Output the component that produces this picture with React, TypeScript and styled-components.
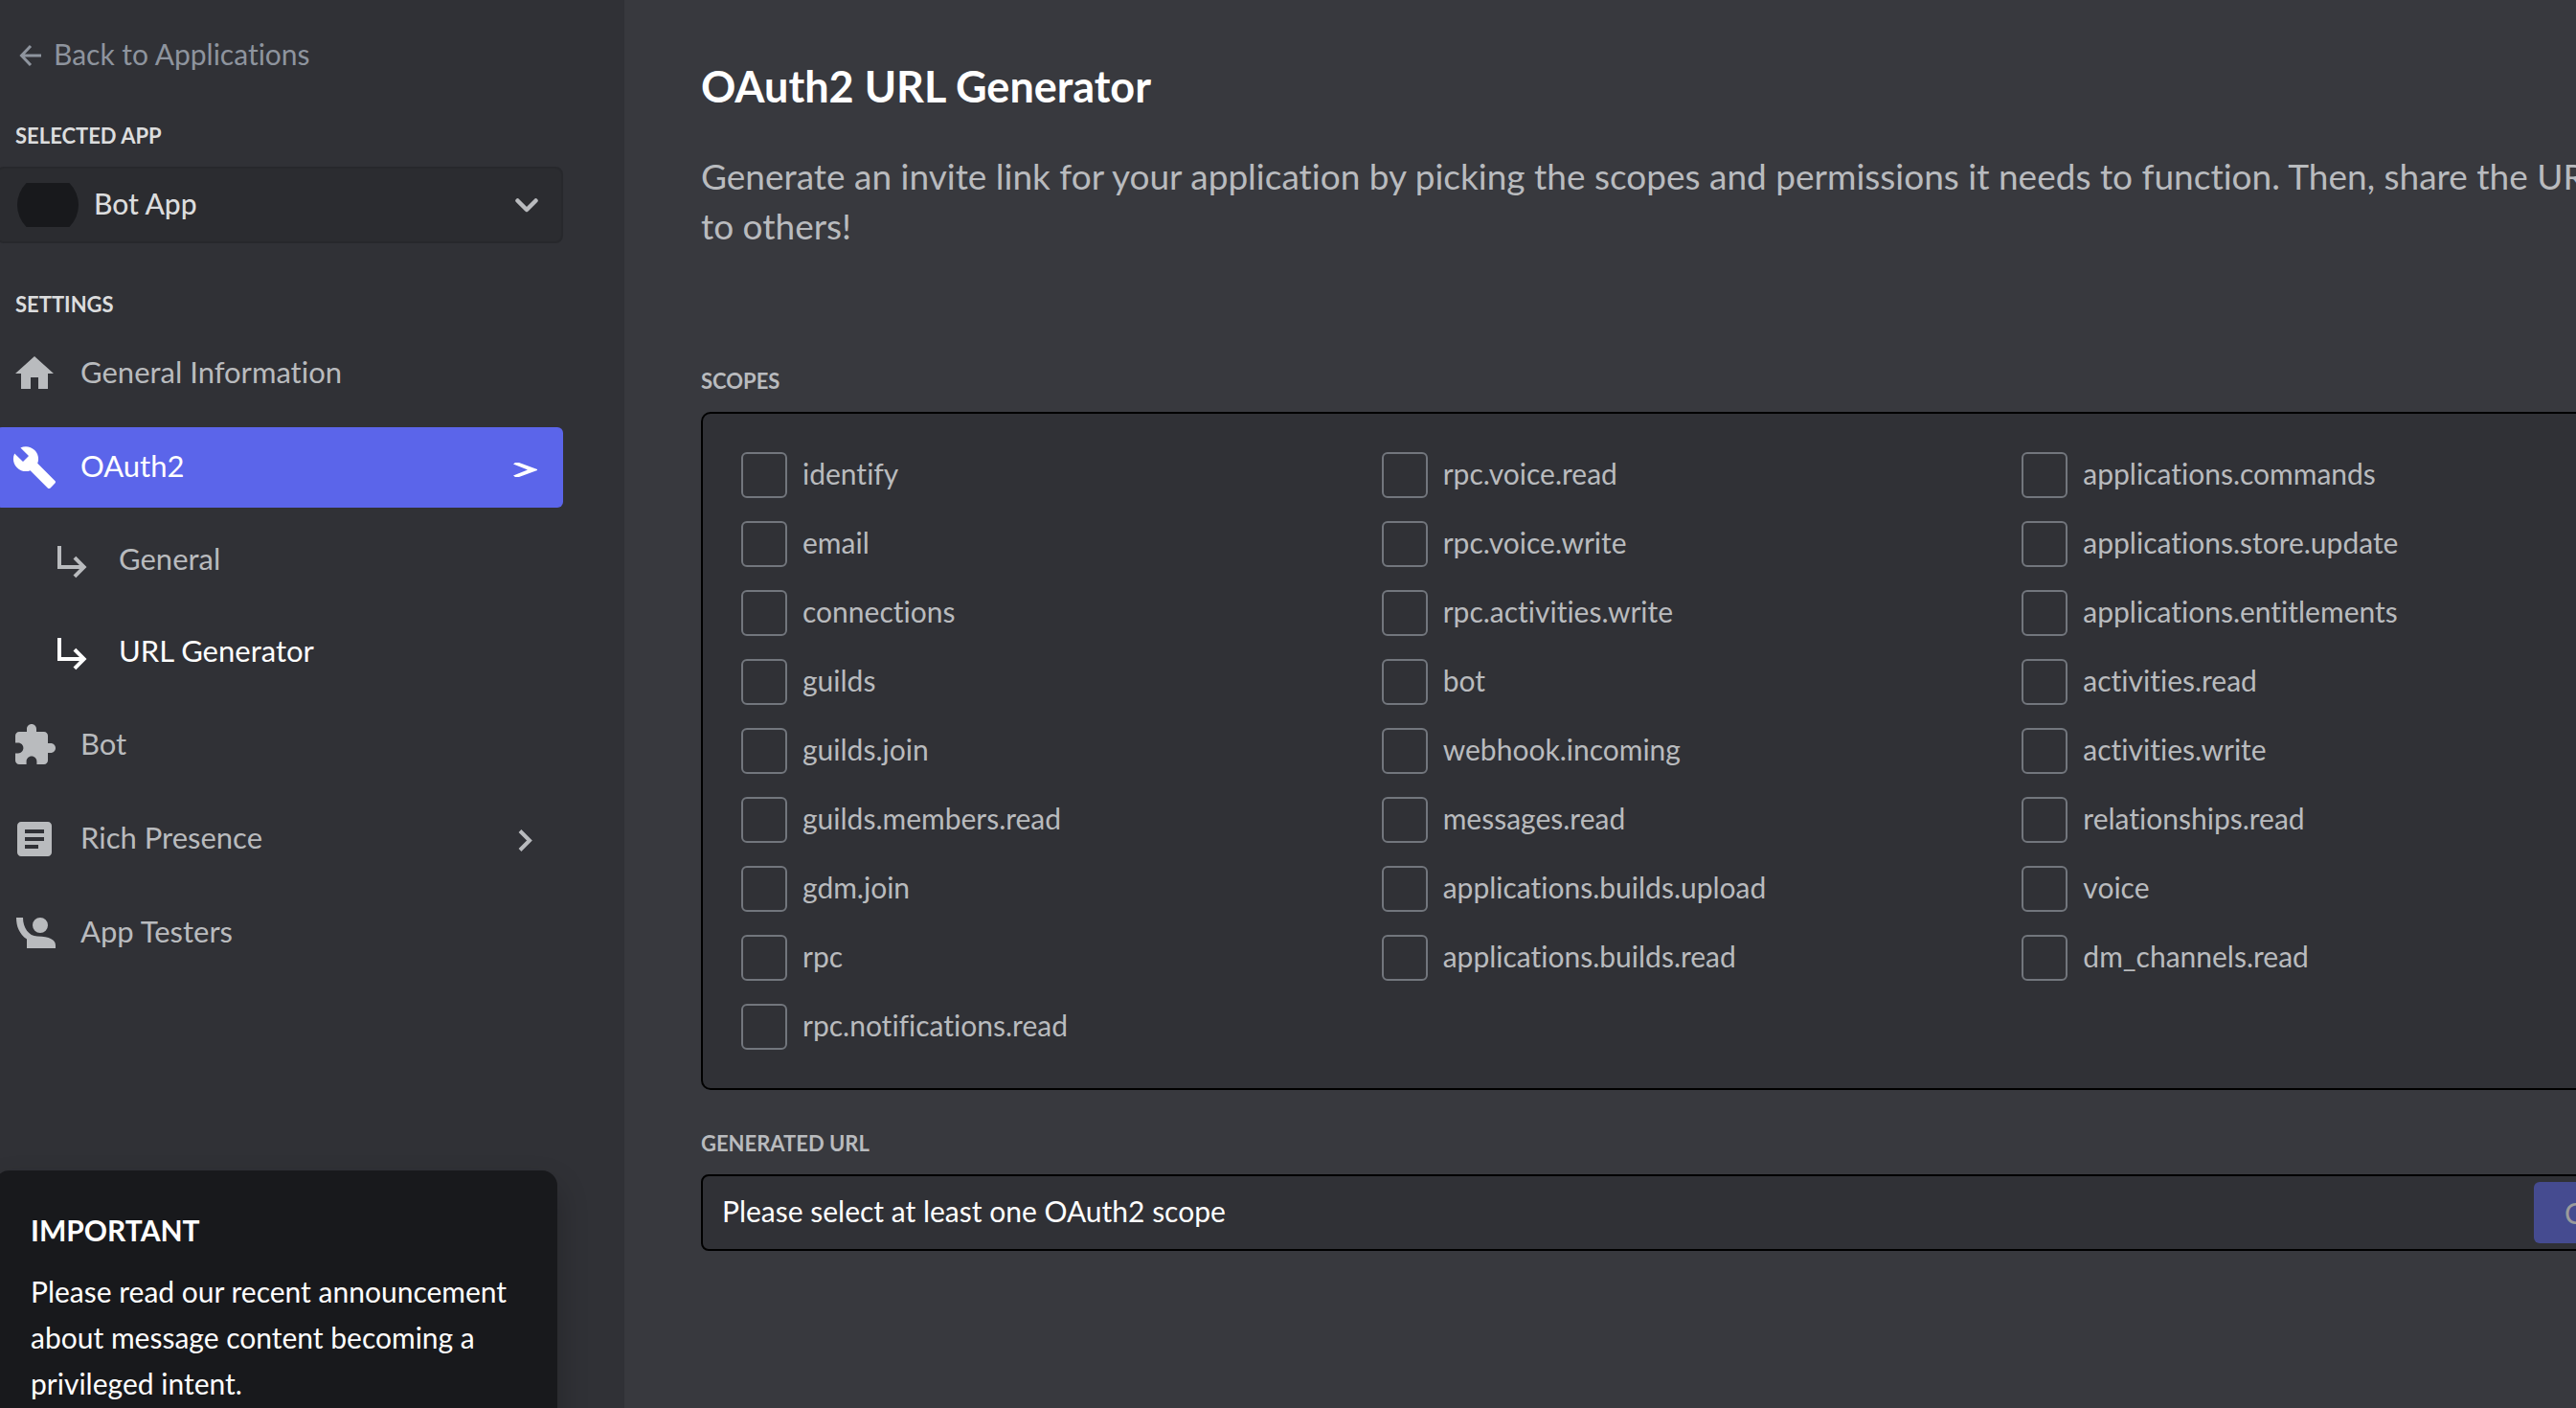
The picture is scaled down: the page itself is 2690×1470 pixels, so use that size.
import React, { useState } from 'react';
import styled, { createGlobalStyle, css } from 'styled-components';

const GlobalStyle = createGlobalStyle`
  *, *::before, *::after { box-sizing: border-box; }
  body {
    margin: 0;
    background: #38393e;
    font-family: Lato, "Open Sans", sans-serif;
    font-size: 30px;
    font-variant-ligatures: none;
    line-height: 48px;
    color: #fff;
  }
  button, input, select { font: inherit; color: inherit; }
`;

const Page = styled.div`
  display: flex;
  height: 100vh;
  overflow: hidden;
`;

const Sidebar = styled.aside`
  flex: 0 0 652px;
  padding: 34px 64px 0 0;
  background: #303136;
`;

const BackLink = styled.a`
  display: flex;
  align-items: center;
  gap: 12px;
  height: 48px;
  margin-bottom: 44px;
  padding-left: 20px;
  color: #8e949e;
  text-decoration: none;
`;

const Caption = styled.span`
  flex: 1;
  padding-bottom: 4px;
`;

const sectionLabel = css`
  display: block;
  font-size: 22px;
  font-weight: 700;
  line-height: 32px;
  text-transform: uppercase;
`;

const SideLabel = styled.label`
  ${sectionLabel}
  padding: 0 16px 16px;
  color: #dcddde;
`;

const SideHeading = styled.h2`
  ${sectionLabel}
  margin: 48px 0 14px;
  padding: 0 16px;
  color: #dcddde;
`;

const AppPicker = styled.div`
  display: flex;
  align-items: center;
  height: 80px;
  margin-left: -4px;
  padding: 0 24px 0 20px;
  border: 2px solid #27282c;
  border-radius: 8px;
  background: #2b2c30;
`;

const Avatar = styled.span`
  flex: none;
  display: flex;
  align-items: center;
  width: 64px;
  height: 46px;
  overflow: hidden;

  &::before {
    content: '';
    flex: none;
    width: 64px;
    height: 64px;
    border-radius: 50%;
    background: #18191c;
  }
`;

const AppSelect = styled.select`
  flex: 1;
  min-width: 0;
  height: 100%;
  padding: 0 0 4px 16px;
  border: 0;
  outline: 0;
  appearance: none;
  background: transparent;
  color: #dcddde;
  font-weight: 500;
`;

const Nav = styled.nav`
  display: flex;
  flex-direction: column;
  gap: 14px;
  margin-left: -4px;
`;

const NavLink = styled.a<{ $selected?: boolean }>`
  display: flex;
  align-items: center;
  gap: 24px;
  height: 84px;
  padding: 0 24px 0 16px;
  border-radius: 6px;
  background: ${(p) => (p.$selected ? '#5b65ea' : 'transparent')};
  color: ${(p) => (p.$selected ? '#fff' : '#b9bbbe')};
  font-size: 31px;
  text-decoration: none;
`;

const SubLink = styled(NavLink)<{ $current?: boolean }>`
  height: 82px;
  padding-left: 56px;
  color: ${(p) => (p.$current ? '#fff' : '#b9bbbe')};
`;

const Notice = styled.section`
  margin: 206px 6px 0 -6px;
  padding: 38px;
  border-radius: 16px;
  background: #18191c;
  box-shadow: 0 16px 32px rgba(0, 0, 0, 0.24);
`;

const NoticeTitle = styled.h3`
  margin: 0 0 16px;
  font-size: inherit;
  font-weight: 700;
  text-transform: uppercase;
`;

const NoticeText = styled.p`
  margin: 0;
`;

const Main = styled.main`
  flex: 1;
  min-width: 0;
  padding: 62px 0 0 80px;
`;

const Content = styled.div`
  margin-right: -132px;
`;

const Title = styled.h1`
  margin: 0 0 40px;
  font-size: 45px;
  font-weight: 700;
  line-height: 56px;
`;

const Description = styled.p`
  margin: 0 0 120px;
  padding-right: 64px;
  color: #b9bbbe;
  font-size: 37px;
  line-height: 52px;
`;

const Fieldset = styled.fieldset`
  min-width: 0;
  margin: 0 0 40px;
  padding: 0;
  border: 0;
`;

const Legend = styled.legend`
  ${sectionLabel}
  padding: 0 0 16px;
  color: #b9bbbe;
`;

const ScopePanel = styled.div`
  display: grid;
  grid-template-columns: repeat(3, 1fr);
  padding: 40px;
  border: 2px solid #000;
  border-radius: 10px;
  background: #303136;
`;

const ScopeColumn = styled.ul`
  display: flex;
  flex-direction: column;
  gap: 24px;
  margin: 0;
  padding: 0;
  list-style: none;
`;

const ScopeLabel = styled.label`
  display: flex;
  align-items: center;
  gap: 16px;
  height: 48px;
  color: #b9bbbe;
`;

const Checkbox = styled.input`
  appearance: none;
  width: 48px;
  height: 48px;
  margin: 0;
  border: 2px solid #72767d;
  border-radius: 6px;

  &:checked {
    border-color: #5b65ea;
    background: #5b65ea;
  }
`;

const UrlLabel = styled.label`
  ${sectionLabel}
  padding-bottom: 16px;
  color: #b9bbbe;
`;

const UrlBox = styled.div`
  display: flex;
  height: 80px;
  padding: 6px;
  border: 2px solid #000;
  border-radius: 8px;
  background: #303136;
`;

const UrlInput = styled.input`
  flex: 1;
  min-width: 0;
  padding: 0 14px 4px;
  border: 0;
  outline: 0;
  background: transparent;
`;

const CopyButton = styled.button`
  min-width: 168px;
  padding: 0 32px;
  border: 0;
  border-radius: 6px;
  background: #454b90;
  color: #9b9b9b;
  text-align: left;
`;

const Icon = styled.svg`
  flex: none;
  fill: currentColor;
`;

const NavIcon = ({ d }: { d: string }) => (
  <Icon width="48" height="48" viewBox="0 0 24 24" aria-hidden="true">
    <path d={d} />
  </Icon>
);

const icons = {
  home: 'M10 20v-6h4v6h5v-8h3L12 3 2 12h3v8z',
  wrench:
    'M22.7 19l-9.1-9.1c.9-2.3.4-5-1.5-6.9-2-2-5-2.4-7.4-1.3L9 6 6 9 1.6 4.7C.4 7.1.9 10.1 2.9 12.1c1.9 1.9 4.6 2.4 6.9 1.5l9.1 9.1c.4.4 1 .4 1.4 0l2.3-2.3c.5-.4.5-1.1.1-1.4z',
  puzzle:
    'M20.5 11H19V7c0-1.1-.9-2-2-2h-4V3.5C13 2.12 11.88 1 10.5 1S8 2.12 8 3.5V5H4c-1.1 0-1.99.9-1.99 2v3.8H3.5c1.49 0 2.7 1.21 2.7 2.7s-1.21 2.7-2.7 2.7H2V20c0 1.1.9 2 2 2h3.8v-1.5c0-1.49 1.21-2.7 2.7-2.7 1.49 0 2.7 1.21 2.7 2.7V22H17c1.1 0 2-.9 2-2v-4h1.5c1.38 0 2.5-1.12 2.5-2.5S21.88 11 20.5 11z',
  article:
    'M19 3H5c-1.1 0-2 .9-2 2v14c0 1.1.9 2 2 2h14c1.1 0 2-.9 2-2V5c0-1.1-.9-2-2-2zm-5 14H7v-2h7v2zm3-4H7v-2h10v2zm0-4H7V7h10v2z',
  tester:
    'M2.5 4H6c0 5.4 3 9.6 7.5 9.8C20 14 23 15.6 23 18.5V20H8v-4.7C4 12.5 2.5 8.500 2.500 4zM15 4a4 4 0 1 1 0 8 4 4 0 1 1 0-8z',
};

const SubArrow = () => (
  <Icon width="48" height="48" viewBox="0 0 48 48" aria-hidden="true">
    <path d="M8 9h4v20h19l-6.500-6.500 2.800-2.800L38.500 31 27.300 42.300l-2.800-2.800L31 33H8z" />
  </Icon>
);

const Chevron = ({ direction }: { direction: 'down' | 'right' }) =>
  direction === 'down' ? (
    <Icon width="24" height="24" viewBox="0 0 24 24" aria-hidden="true">
      <path d="M2.500 7.500 12 17l9.500-9.500" fill="none" stroke="#b9bbbe" strokeWidth="4.500" strokeLinecap="round" strokeLinejoin="round" />
    </Icon>
  ) : (
    <Icon width="24" height="28" viewBox="0 0 24 28" aria-hidden="true">
      <path d="M3 5.500l10 10-10 10" fill="none" stroke="currentColor" strokeWidth="4" />
    </Icon>
  );

const OpenMarker = () => (
  <Icon width="28" height="24" viewBox="0 0 28 24" aria-hidden="true">
    <path d="M0 8.500 2 7h4l19 7v1L6 22H2l-2-1.500 15-6z" />
  </Icon>
);

const scopeColumns = [
  ['identify', 'email', 'connections', 'guilds', 'guilds.join', 'guilds.members.read', 'gdm.join', 'rpc', 'rpc.notifications.read'],
  ['rpc.voice.read', 'rpc.voice.write', 'rpc.activities.write', 'bot', 'webhook.incoming', 'messages.read', 'applications.builds.upload', 'applications.builds.read'],
  ['applications.commands', 'applications.store.update', 'applications.entitlements', 'activities.read', 'activities.write', 'relationships.read', 'voice', 'dm_channels.read'],
];

export default function App() {
  const [scopes, setScopes] = useState<string[]>([]);
  const toggle = (scope: string) =>
    setScopes((s) => (s.includes(scope) ? s.filter((x) => x !== scope) : [...s, scope]));
  const url = scopes.length
    ? `https://discord.com/api/oauth2/authorize?scope=${scopes.join('%20')}`
    : 'Please select at least one OAuth2 scope';

  return (
    <Page>
      <GlobalStyle />
      <Sidebar>
        <BackLink href="#applications">
          <Icon width="24" height="24" viewBox="0 0 24 24" aria-hidden="true">
            <path d="M12 2 2.500 12 12 22M2.500 12H23" fill="none" stroke="currentColor" strokeWidth="3" />
          </Icon>
          <Caption>Back to Applications</Caption>
        </BackLink>

        <SideLabel htmlFor="selected-app">Selected App</SideLabel>
        <AppPicker>
          <Avatar />
          <AppSelect id="selected-app">
            <option>Bot App</option>
          </AppSelect>
          <Chevron direction="down" />
        </AppPicker>

        <SideHeading>Settings</SideHeading>
        <Nav>
          <NavLink href="#information">
            <NavIcon d={icons.home} />
            <Caption>General Information</Caption>
          </NavLink>
          <NavLink href="#oauth2" $selected>
            <NavIcon d={icons.wrench} />
            <Caption>OAuth2</Caption>
            <OpenMarker />
          </NavLink>
          <SubLink href="#general">
            <SubArrow />
            <Caption>General</Caption>
          </SubLink>
          <SubLink href="#url-generator" $current aria-current="page">
            <SubArrow />
            <Caption>URL Generator</Caption>
          </SubLink>
          <NavLink href="#bot">
            <NavIcon d={icons.puzzle} />
            <Caption>Bot</Caption>
          </NavLink>
          <NavLink href="#rich-presence">
            <NavIcon d={icons.article} />
            <Caption>Rich Presence</Caption>
            <Chevron direction="right" />
          </NavLink>
          <NavLink href="#testers">
            <NavIcon d={icons.tester} />
            <Caption>App Testers</Caption>
          </NavLink>
        </Nav>

        <Notice>
          <NoticeTitle>Important</NoticeTitle>
          <NoticeText>Please read our recent announcement about message content becoming a privileged intent.</NoticeText>
        </Notice>
      </Sidebar>

      <Main>
        <Content>
          <Title>OAuth2 URL Generator</Title>
          <Description>
            Generate an invite link for your application by picking the scopes and permissions it needs to function.
            Then, share the URL to others!
          </Description>

          <Fieldset>
            <Legend>Scopes</Legend>
            <ScopePanel>
              {scopeColumns.map((column) => (
                <ScopeColumn key={column[0]}>
                  {column.map((scope) => (
                    <li key={scope}>
                      <ScopeLabel>
                        <Checkbox type="checkbox" checked={scopes.includes(scope)} onChange={() => toggle(scope)} />
                        <Caption>{scope}</Caption>
                      </ScopeLabel>
                    </li>
                  ))}
                </ScopeColumn>
              ))}
            </ScopePanel>
          </Fieldset>

          <UrlLabel htmlFor="generated-url">Generated URL</UrlLabel>
          <UrlBox>
            <UrlInput id="generated-url" readOnly value={url} />
            <CopyButton type="button" disabled={!scopes.length}>Copy</CopyButton>
          </UrlBox>
        </Content>
      </Main>
    </Page>
  );
}
